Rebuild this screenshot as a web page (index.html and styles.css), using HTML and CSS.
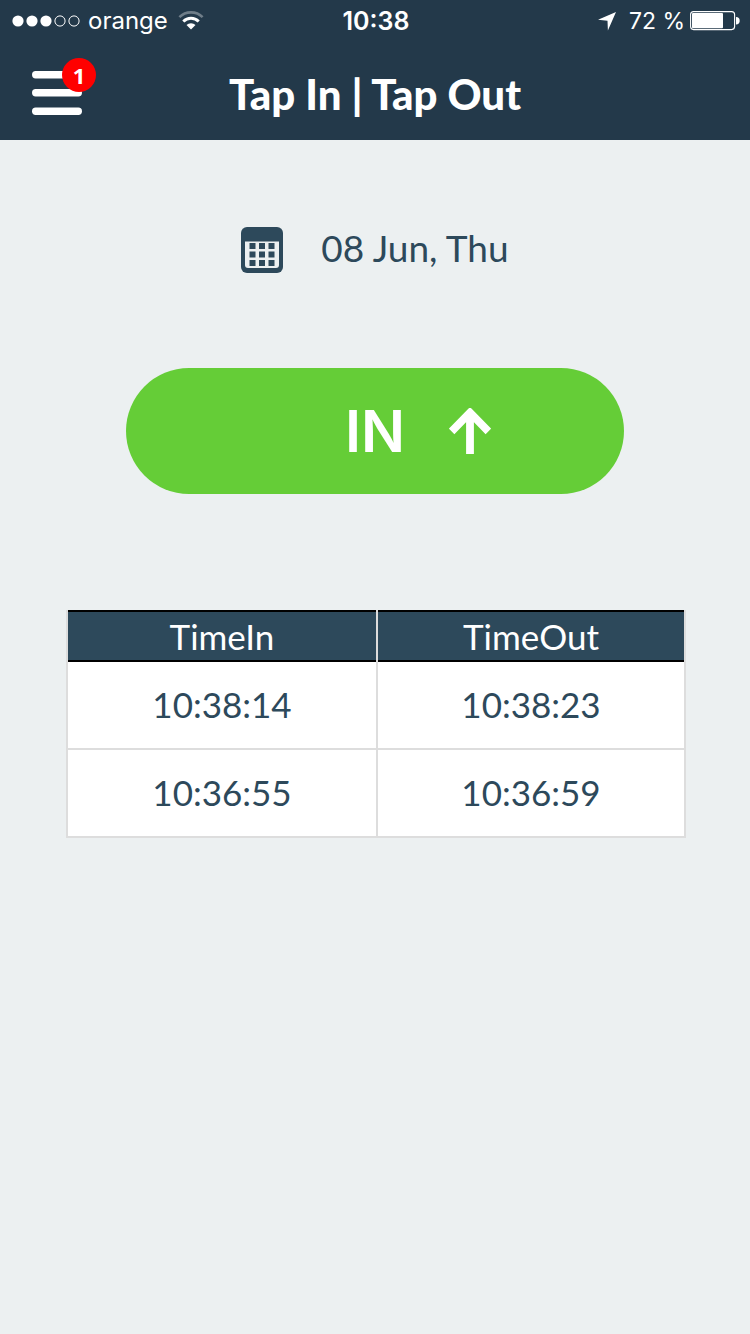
FILE: index.html
```html
<!DOCTYPE html>
<html lang="en">
<head>
<meta charset="utf-8">
<meta name="viewport" content="width=device-width, initial-scale=1">
<title>Tap In | Tap Out</title>
<link rel="stylesheet" href="styles.css">
</head>
<body>
<header class="top">
  <div class="status">
    <div class="status-side">
      <svg class="signal" width="68" height="12" viewBox="0 0 68 12" aria-hidden="true">
        <g fill="#fff"><circle cx="6" cy="6" r="5.6"/><circle cx="20" cy="6" r="5.6"/><circle cx="34" cy="6" r="5.6"/></g>
        <g fill="none" stroke="#fff"><circle cx="48" cy="6" r="5.1"/><circle cx="62" cy="6" r="5.1"/></g>
      </svg>
      <span class="carrier">orange</span>
      <svg class="wifi" width="26" height="20" viewBox="0 0 26 20" aria-hidden="true">
        <g fill="none" stroke="#fff">
          <path d="M1.4 6.2a16.4 16.4 0 0 1 23.2 0" stroke-width="2.6" opacity=".35"/>
          <path d="M5.3 10.500a10.9 10.9 0 0 1 15.4 0" stroke-width="2.9"/>
        </g>
        <path fill="#fff" d="M13 18.500l-4.500-4.500a6.400 6.400 0 0 1 9 0z"/>
      </svg>
    </div>
    <span class="clock">10:38</span>
    <div class="status-side status-end">
      <svg class="location" width="20" height="20" viewBox="0 0 20 20" aria-hidden="true"><path fill="#fff" d="M19 1L10.900 19.500 10.500 9.800 1 8.800z"/></svg>
      <span class="percent">72 %</span>
      <svg class="battery" width="50" height="20" viewBox="0 0 50 20" aria-hidden="true">
        <rect x=".6" y=".6" width="44" height="18" rx="3" fill="none" stroke="#fff" stroke-width="1.100"/>
        <rect x="2" y="2" width="31" height="15.200" rx="1" fill="#fff"/>
        <path fill="#fff" d="M46 6a3.500 3.500 0 0 1 0 7.400z"/>
      </svg>
    </div>
  </div>
  <div class="bar">
    <button class="menu" type="button" aria-label="Menu">
      <svg width="50" height="44" viewBox="0 0 50 44" aria-hidden="true"><g fill="#fff"><rect width="50" height="7.500" rx="3.700"/><rect y="18" width="50" height="7.500" rx="3.700"/><rect y="36.500" width="50" height="7.500" rx="3.700"/></g></svg>
      <span class="badge">1</span>
    </button>
    <h1 class="title">Tap In | Tap Out</h1>
  </div>
</header>
<main class="content">
  <div class="date">
    <svg width="42" height="46" viewBox="0 0 42 46" aria-hidden="true">
      <rect width="42" height="46" rx="6" fill="#2d495b"/>
      <path fill="#ecf0f1" d="M4 14.500h34V38a3 3 0 0 1-3 3H7a3 3 0 0 1-3-3z"/>
      <path fill="#2d495b" d="M8.500 16h6v6h-6zM18 16h6v6h-6zM27.500 16h6v6h-6zM8.500 24.500h6v6h-6zM18 24.500h6v6h-6zM27.500 24.500h6v6h-6zM8.500 33h6v6h-6zM18 33h6v6h-6zM27.500 33h6v6h-6z"/>
    </svg>
    <span class="date-text">08 Jun, Thu</span>
  </div>
  <button class="tap" type="button">
    <span class="tap-label">IN</span>
    <svg class="tap-arrow" width="42" height="46" viewBox="0 0 42 46" aria-hidden="true"><path d="M21 46V5M2.600 23.400L21 4.600 39.400 23.400" fill="none" stroke="#fff" stroke-width="7.800"/></svg>
  </button>
  <table class="times">
    <thead><tr><th scope="col">TimeIn</th><th scope="col">TimeOut</th></tr></thead>
    <tbody>
      <tr><td>10:38:14</td><td>10:38:23</td></tr>
      <tr><td>10:36:55</td><td>10:36:59</td></tr>
    </tbody>
  </table>
</main>
</body>
</html>
```
FILE: styles.css
```css
* {
  box-sizing: border-box;
}

body {
  margin: 0;
  min-height: 100vh;
  background: #ecf0f1;
  color: #2d495b;
  font-family: Lato, "Open Sans", sans-serif;
}

button {
  border: 0;
  padding: 0;
  color: #fff;
  font: inherit;
}

svg {
  display: block;
}

.top {
  background: #23394a;
  color: #fff;
}

.status {
  display: grid;
  grid-template-columns: 1fr auto 1fr;
  align-items: center;
  height: 42px;
  padding: 0 10px 0 12px;
  font: 24px/42px Inter, sans-serif;
}

.status-side {
  display: flex;
  align-items: center;
}

.status-end {
  justify-content: flex-end;
}

.carrier {
  margin: 0 10px 0 8px;
}

.clock {
  font-size: 25px;
  font-weight: 600;
}

.percent {
  margin: 0 5px 0 12px;
  font-size: 23px;
}

.bar {
  display: grid;
  grid-template-columns: 1fr auto 1fr;
  align-items: center;
  height: 98px;
  padding: 0 32px;
}

.menu {
  position: relative;
  justify-self: start;
  margin-top: 4px;
  background: none;
}

.badge {
  position: absolute;
  top: -13px;
  right: -14px;
  width: 34px;
  height: 34px;
  border-radius: 50%;
  background: #f00;
  font: 700 22px/34px "Open Sans", sans-serif;
  text-align: center;
}

.title {
  margin: 0;
  padding-top: 6px;
  font-size: 42px;
  font-weight: 900;
  line-height: 48px;
}

.content {
  display: flex;
  flex-direction: column;
  align-items: center;
  padding: 84px 64px 64px;
}

.date {
  display: flex;
  align-items: center;
  gap: 38px;
  padding-top: 2px;
}

.date-text {
  padding-bottom: 4px;
  font-size: 37px;
  line-height: 44px;
}

.tap {
  display: grid;
  grid-template-columns: 1fr auto 1fr;
  align-items: center;
  width: 80%;
  height: 126px;
  margin-top: 94px;
  border-radius: 63px;
  background: #65cd37;
}

.tap-label {
  grid-column: 2;
  font: 600 58px/64px Inter, sans-serif;
}

.tap-arrow {
  margin-left: 44px;
}

.times {
  align-self: flex-end;
  width: calc(100% - 2px);
  margin-top: 116px;
  border-spacing: 0;
  table-layout: fixed;
  background: #fff;
  font-size: 35px;
  text-align: center;
}

.times th,
.times td {
  padding: 0;
  border-left: 2px solid #ddd;
}

.times th:last-child,
.times td:last-child {
  border-right: 2px solid #ddd;
}

.times th {
  height: 52px;
  background: #2d495b;
  box-shadow: inset 0 2px #000, inset 0 -2px #000;
  color: #fff;
  font-weight: 400;
}

.times td {
  height: 88px;
  padding-bottom: 2px;
  border-bottom: 2px solid #ddd;
}
```
